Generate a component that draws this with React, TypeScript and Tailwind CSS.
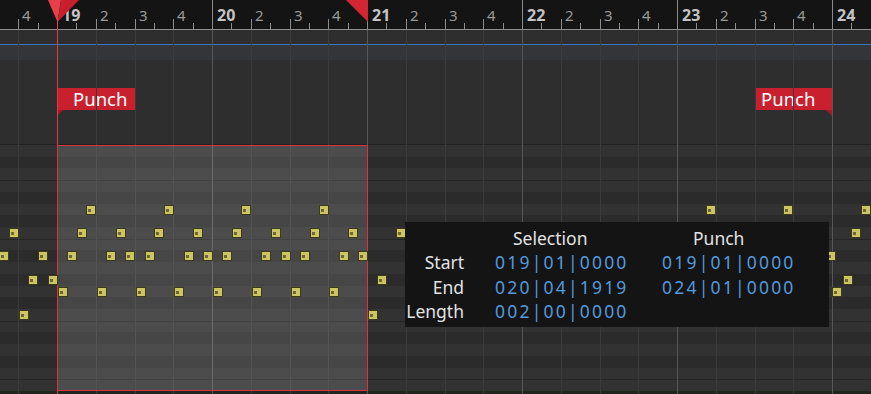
const HALF = 19.375
const px = (k: number) => Math.round(57 + k * HALF)

// piano roll rows (top -> bottom), true = black key
const ROWS = [false, true, false, false, true, false, true, false, false, true, false, true, false, true, false, false, true, false, true, false, false]
const OCTAVE_LINES = [3, 8, 15, 20]
const ROW_H = 11.72

const NOTES: [number, number[]][] = [
  [5, [86, 164, 241, 319, 706, 783, 861]],
  [7, [9, 77, 116, 154, 193, 232, 271, 310, 348, 396, 851]],
  [9, [-1, 38, 67, 106, 125, 145, 184, 203, 222, 261, 281, 300, 339, 358, 826]],
  [11, [28, 48, 377, 843]],
  [12, [58, 97, 136, 174, 213, 252, 291, 329, 832]],
  [14, [19, 368]],
]

function Ruler() {
  const ticks = []
  for (let k = -4; k <= 42; k++) {
    const x = px(k) + 0.5
    if (k % 8 === 0) ticks.push(<line key={k} x1={x} x2={x} y1={0} y2={29} stroke="#8c8c8c" />)
    else if (k % 2 === 0) ticks.push(<line key={k} x1={x} x2={x} y1={19} y2={29} stroke="#8c8c8c" />)
    else ticks.push(<line key={k} x1={x} x2={x} y1={23} y2={29} stroke="#8c8c8c" />)
  }
  const labels = []
  for (let b = -1; b <= 20; b++) {
    const x = px(b * 2)
    const beat = ((b % 4) + 4) % 4
    if (beat === 0) {
      labels.push(
        <span key={b} className="absolute top-[3px] text-[16px] leading-[24px] font-bold text-[#c4c4c4]" style={{ left: x + 5 }}>
          {19 + Math.floor(b / 4)}
        </span>
      )
    } else {
      labels.push(
        <span key={b} className="absolute top-[3px] text-[15px] leading-[24px] text-[#9a9a9a]" style={{ left: x + 4 }}>
          {beat + 1}
        </span>
      )
    }
  }
  return (
    <div className="relative h-[30px] bg-[#141414] border-b border-[#8f8f8f]">
      <svg className="absolute inset-0" width={871} height={29}>{ticks}</svg>
      {labels}
      <svg className="absolute left-0 top-0" width={871} height={29}>
        <polygon points="48,0 61,0 57.5,22" fill="#e8404a" />
        <polygon points="61,0 79,0 57.5,22" fill="#c81f2c" />
        <polygon points="346,0 368,0 368,22" fill="#d42632" />
      </svg>
    </div>
  )
}

function Grid() {
  const lines = []
  for (let b = -1; b <= 22; b++) {
    const x = px(b * 2) + 0.5
    lines.push(<line key={b} x1={x} x2={x} y1={0} y2={364} stroke={b % 4 === 0 ? '#575757' : '#3b3b3b'} />)
  }
  return <svg className="absolute left-0 top-[30px] pointer-events-none" width={871} height={364}>{lines}</svg>
}

function PunchFlag({ side }: { side: 'start' | 'end' }) {
  if (side === 'start') {
    return (
      <div className="absolute left-[58px] top-[28px]">
        <div className="w-[77px] h-[22px] bg-[#c8202e] pl-[15px] text-[18.5px] leading-[22px] text-white">Punch</div>
        <svg width={6} height={6} className="block"><polygon points="0,0 5,0 0,5" fill="#a81824" /></svg>
      </div>
    )
  }
  return (
    <div className="absolute left-[756px] top-[28px] flex flex-col items-end">
      <div className="w-[76px] h-[22px] bg-[#c8202e] pl-[5px] text-[18.5px] leading-[22px] text-white">Punch</div>
      <svg width={6} height={6} className="block"><polygon points="0,0 6,0 6,6" fill="#a81824" /></svg>
    </div>
  )
}

function Note({ x, row }: { x: number; row: number }) {
  return (
    <div
      className="absolute w-[10px] h-[10px] bg-[#cdc463] border border-[#3c3a18] flex items-center"
      style={{ left: x, top: Math.round(row * ROW_H + 1) }}
    >
      <div className="ml-[1px] w-[3px] h-[3px] bg-[#6e6830]" />
    </div>
  )
}

function Track() {
  return (
    <div className="flex-1 flex flex-col border-t border-[#222]">
      {ROWS.map((black, i) => (
        <div
          key={i}
          className={
            (black ? 'bg-[#2b2b2b]' : 'bg-[#323232]') +
            (OCTAVE_LINES.includes(i) ? ' border-t border-[#252525]' : '')
          }
          style={{ height: ROW_H }}
        />
      ))}
    </div>
  )
}

function Tooltip() {
  const v = 'text-[#5499dc] tracking-[2.2px]'
  return (
    <div className="absolute left-[405px] top-[222px] w-[424px] h-[105px] bg-[#141414] pt-[4px] text-[17.5px] leading-[24.4px] text-[#e2e2e2]">
      <div className="grid grid-cols-[59px_198px_1fr]">
        <div />
        <div className="pl-[49px]">Selection</div>
        <div className="pl-[31px]">Punch</div>

        <div className="text-right">Start</div>
        <div className={'pl-[31px] ' + v}>019|01|0000</div>
        <div className={v}>019|01|0000</div>

        <div className="text-right">End</div>
        <div className={'pl-[31px] ' + v}>020|04|1919</div>
        <div className={v}>024|01|0000</div>

        <div className="text-right">Length</div>
        <div className={'pl-[31px] ' + v}>002|00|0000</div>
        <div />
      </div>
    </div>
  )
}

export default function App() {
  return (
    <div className="relative w-[871px] h-[394px] overflow-hidden bg-[#2e2e2e] flex flex-col font-['Noto_Sans',sans-serif]">
      <Ruler />
      <div className="h-[14px] bg-[#2e2e2e]" />
      <div className="h-px bg-[#3d75bf]" />
      <div className="h-[15px] bg-[#343538]" />
      <div className="relative h-[85px] bg-[#2e2e2e]">
        <PunchFlag side="start" />
        <PunchFlag side="end" />
      </div>
      <Track />
      <div className="h-[3px] bg-[#1e261e]" />
      <Grid />
      <div className="absolute left-[57px] top-[22px] w-px h-[372px] bg-[#e23a40]" />
      <div className="absolute left-0 right-0 bottom-0 top-[145px] pointer-events-none">
        <div className="absolute left-[57px] top-0 w-[311px] h-[246px] bg-[#ffffff21] shadow-[inset_0_0_0_1px_#dc343e]" />
        {NOTES.map(([row, xs]) => xs.map((x) => <Note key={row + '-' + x} x={x} row={row} />))}
      </div>
      <Tooltip />
    </div>
  )
}
